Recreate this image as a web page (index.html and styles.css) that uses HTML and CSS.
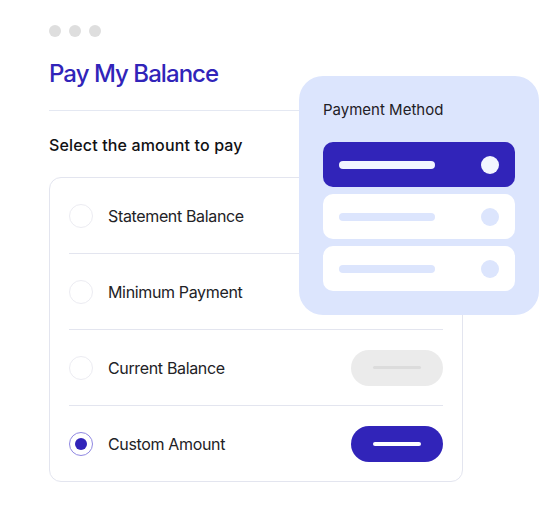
FILE: index.html
```html
<!DOCTYPE html>
<html lang="en">
<head>
<meta charset="utf-8">
<title>Pay My Balance</title>
<link rel="stylesheet" href="styles.css">
</head>
<body>
<div class="canvas">
  <div class="main">
    <div class="dots"><span></span><span></span><span></span></div>
    <h1 class="title">Pay My Balance</h1>
    <div class="rule"></div>
    <p class="subtitle">Select the amount to pay</p>
    <div class="card">
      <div class="row">
        <span class="radio"></span>
        <span class="label">Statement Balance</span>
      </div>
      <div class="row">
        <span class="radio"></span>
        <span class="label">Minimum Payment</span>
      </div>
      <div class="row">
        <span class="radio"></span>
        <span class="label">Current Balance</span>
        <span class="pill pill-off"><i></i></span>
      </div>
      <div class="row">
        <span class="radio radio-on"></span>
        <span class="label">Custom Amount</span>
        <span class="pill pill-on"><i></i></span>
      </div>
    </div>
  </div>
  <div class="panel">
    <div class="panel-title">Payment Method</div>
    <div class="options">
      <div class="option option-on"><i class="bar"></i><i class="dot"></i></div>
      <div class="option"><i class="bar"></i><i class="dot"></i></div>
      <div class="option"><i class="bar"></i><i class="dot"></i></div>
    </div>
  </div>
</div>
</body>
</html>
```
FILE: styles.css
```css
* { box-sizing: border-box; }
html, body { margin: 0; padding: 0; background: #ffffff; }
body { font-family: Inter, "Noto Sans", Arial, sans-serif; color: #1d1d24; }

.canvas { position: relative; width: 540px; height: 530px; overflow: hidden; }

.main { padding: 25px 0 0 49px; width: 463px; }

.dots { display: flex; gap: 8px; height: 12px; }
.dots span { width: 12px; height: 12px; border-radius: 50%; background: #dedede; }

.title {
  margin: 22px 0 0;
  font-size: 24px;
  line-height: 30px;
  font-weight: 500;
  color: #3124b9;
  letter-spacing: -0.95px;
}

.rule { margin-top: 21px; height: 1px; background: #e4e8f2; width: 414px; }

.subtitle {
  margin: 24px 0 0;
  font-size: 16px;
  line-height: 20px;
  font-weight: 500;
  color: #111114;
  letter-spacing: 0.15px;
}

.card {
  margin-top: 22px;
  width: 414px;
  border: 1px solid #e3e5ef;
  border-radius: 12px;
  padding: 0 19px;
}

.row {
  display: flex;
  align-items: center;
  height: 76px;
  border-bottom: 1px solid #e3e5ef;
}
.row:last-child { border-bottom: none; height: 75px; }

.radio {
  width: 24px; height: 24px;
  border-radius: 50%;
  border: 1.5px solid #ececf2;
  flex: none;
  display: flex; align-items: center; justify-content: center;
}
.radio-on { border-color: #9088e2; }
.radio-on::after {
  content: "";
  width: 12px; height: 12px; border-radius: 50%;
  background: #3124b9;
}

.label {
  margin-left: 15px;
  font-size: 16px;
  line-height: 20px;
  color: #222226;
  letter-spacing: -0.35px;
  flex: 1;
}

.pill {
  width: 92px; height: 36px; border-radius: 18px;
  display: flex; align-items: center; justify-content: center;
  flex: none;
}
.pill i { display: block; width: 48px; height: 4px; border-radius: 2px; }
.pill-off { background: #ebebeb; }
.pill-off i { background: #dcdcdc; height: 3px; }
.pill-on { background: #3124b9; }
.pill-on i { background: #ffffff; }

.panel {
  position: absolute;
  left: 299px; top: 76px;
  width: 240px; height: 239px;
  border-radius: 24px;
  background: #dce5fd;
  padding: 24px;
}
.panel-title {
  font-size: 15px;
  line-height: 20px;
  color: #1f2026;
  letter-spacing: 0;
}
.options { margin-top: 22px; display: flex; flex-direction: column; gap: 7px; }
.option {
  height: 45px;
  border-radius: 10px;
  background: #ffffff;
  display: flex; align-items: center; justify-content: space-between;
  padding: 0 16px;
}
.option .bar { display: block; width: 96px; height: 8px; border-radius: 4px; background: #dce5fd; }
.option .dot { display: block; width: 18px; height: 18px; border-radius: 50%; background: #dce5fd; }
.option-on { background: #3124b9; }
.option-on .bar, .option-on .dot { background: #f2f5ff; }
```
